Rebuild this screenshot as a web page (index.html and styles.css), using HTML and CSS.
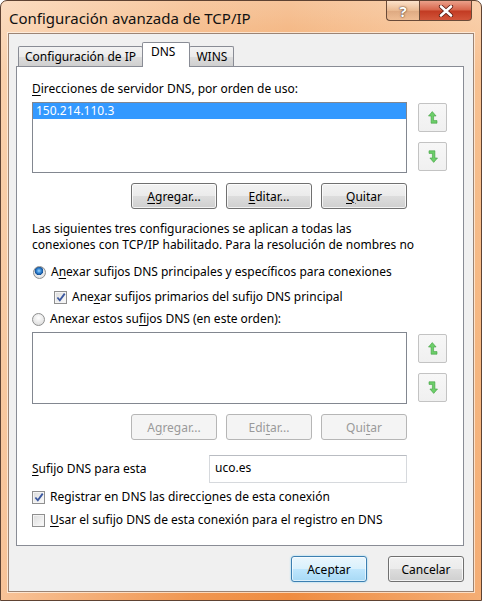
FILE: index.html
```html
<!DOCTYPE html>
<html lang="es">
<head>
    <meta charset="UTF-8">
    <title>Configuración avanzada de TCP/IP</title>
    <link rel="stylesheet" href="styles.css">
</head>
<body>
    <div class="window">
        <div class="titlebar">
            <span class="title">Configuración avanzada de TCP/IP</span>
            <div class="caption-buttons">
                <span class="cap-btn help">?</span>
                <span class="cap-btn close">
                    <svg width="16" height="12" viewBox="0 0 16 12">
                        <path d="M3 1.5 L13 10.5 M13 1.5 L3 10.5" stroke="#5a1a10" stroke-width="4.2" stroke-linecap="round"/>
                        <path d="M3 1.5 L13 10.5 M13 1.5 L3 10.5" stroke="#fff" stroke-width="2.6" stroke-linecap="round"/>
                    </svg>
                </span>
            </div>
        </div>

        <div class="client">
            <div class="tabs">
                <span class="tab">Configuración de IP</span>
                <span class="tab active">DNS</span>
                <span class="tab">WINS</span>
            </div>

            <div class="panel">
                <div class="label"><u>D</u>irecciones de servidor DNS, por orden de uso:</div>
                <div class="list-row">
                    <div class="listbox">
                        <div class="item selected">150.214.110.3</div>
                    </div>
                    <div class="arrows">
                        <span class="arrow">
                            <svg width="10" height="13" viewBox="0 0 10 13"><path class="arrow-icon" d="M0.5 5 L4.3 0.6 L8.1 5 L5.6 5 L5.6 9.6 L9 9.6 L9 12.2 L3.1 12.2 L3.1 5 Z"/></svg>
                        </span>
                        <span class="arrow">
                            <svg width="10" height="13" viewBox="0 0 10 13"><path class="arrow-icon" transform="rotate(180 5 6.5)" d="M0.5 5 L4.3 0.6 L8.1 5 L5.6 5 L5.6 9.6 L9 9.6 L9 12.2 L3.1 12.2 L3.1 5 Z"/></svg>
                        </span>
                    </div>
                </div>
                <div class="btn-row">
                    <span class="btn"><u>A</u>gregar...</span>
                    <span class="btn"><u>E</u>ditar...</span>
                    <span class="btn"><u>Q</u>uitar</span>
                </div>

                <p class="note">Las siguientes tres configuraciones se aplican a todas las<br>conexiones con TCP/IP habilitado. Para la resolución de nombres no</p>

                <div class="option first-radio">
                    <span class="radio checked"></span>
                    <span>A<u>n</u>exar sufijos DNS principales y específicos para conexiones</span>
                </div>
                <div class="option sub">
                    <span class="check checked">
                        <svg width="11" height="11" viewBox="0 0 11 11"><path d="M1.5 5.5 L4.2 8.6 L9.6 1.2" fill="none" stroke="#3b58a0" stroke-width="2"/></svg>
                    </span>
                    <span>Ane<u>x</u>ar sufijos primarios del sufijo DNS principal</span>
                </div>
                <div class="option second-radio">
                    <span class="radio"></span>
                    <span>Anexar estos su<u>f</u>ijos DNS (en este orden):</span>
                </div>

                <div class="list-row second">
                    <div class="listbox"></div>
                    <div class="arrows">
                        <span class="arrow">
                            <svg width="10" height="13" viewBox="0 0 10 13"><path class="arrow-icon" d="M0.5 5 L4.3 0.6 L8.1 5 L5.6 5 L5.6 9.6 L9 9.6 L9 12.2 L3.1 12.2 L3.1 5 Z"/></svg>
                        </span>
                        <span class="arrow">
                            <svg width="10" height="13" viewBox="0 0 10 13"><path class="arrow-icon" transform="rotate(180 5 6.5)" d="M0.5 5 L4.3 0.6 L8.1 5 L5.6 5 L5.6 9.6 L9 9.6 L9 12.2 L3.1 12.2 L3.1 5 Z"/></svg>
                        </span>
                    </div>
                </div>
                <div class="btn-row">
                    <span class="btn disabled">A<u>g</u>regar...</span>
                    <span class="btn disabled">Edi<u>t</u>ar...</span>
                    <span class="btn disabled">Qui<u>t</u>ar</span>
                </div>

                <div class="suffix-row">
                    <span class="suffix-label"><u>S</u>ufijo DNS para esta</span>
                    <span class="textbox">uco.es</span>
                </div>

                <div class="option register">
                    <span class="check checked">
                        <svg width="11" height="11" viewBox="0 0 11 11"><path d="M1.5 5.5 L4.2 8.6 L9.6 1.2" fill="none" stroke="#3b58a0" stroke-width="2"/></svg>
                    </span>
                    <span>Registrar en DNS las direcci<u>o</u>nes de esta conexión</span>
                </div>
                <div class="option use-suffix">
                    <span class="check"></span>
                    <span><u>U</u>sar el sufijo DNS de esta conexión para el registro en DNS</span>
                </div>
            </div>

            <div class="footer">
                <span class="btn default">Aceptar</span>
                <span class="btn">Cancelar</span>
            </div>
        </div>
    </div>
</body>
</html>
```

FILE: styles.css
```css
/* Ventana tipo Vista */
* {
    box-sizing: border-box;
}

body {
    margin: 0;
    font-family: "Noto Sans", "Open Sans", sans-serif;
    font-size: 12px;
    color: #000;
    background: #fff;
}

u {
    text-decoration-thickness: 1px;
    text-underline-offset: 2px;
}

.window {
    width: 482px;
    height: 601px;
    padding: 0 7px 8px 7px;
    border: 1px solid #5e4232;
    border-radius: 7px 7px 0 0;
    display: flex;
    flex-direction: column;
    background:
        linear-gradient(to right, rgba(255, 240, 225, 0.55), rgba(255, 240, 225, 0.1) 40%, rgba(255, 240, 225, 0) 60%, rgba(255, 235, 215, 0.35)),
        linear-gradient(#f6c49a, #f3aa6c 12%, #f09a52 60%, #ef8c40);
}

.titlebar {
    height: 32px;
    display: flex;
    justify-content: space-between;
    align-items: flex-start;
}

.title {
    font-size: 15px;
    line-height: 20px;
    margin-top: 7px;
    margin-left: 1px;
    color: #111;
}

.caption-buttons {
    display: flex;
    margin-right: 2px;
}

.cap-btn {
    height: 20px;
    display: flex;
    align-items: center;
    justify-content: center;
    border: 1px solid #6a4a38;
    border-top: none;
}

.help {
    width: 33px;
    border-radius: 0 0 0 4px;
    border-right: none;
    background: linear-gradient(rgba(255, 240, 225, 0.6), rgba(220, 170, 130, 0.5) 50%, rgba(190, 130, 90, 0.45) 51%, rgba(230, 180, 140, 0.5));
    color: #fff;
    font-size: 15px;
    font-weight: bold;
    text-shadow: 0 0 2px #5a3a28, 0 0 1px #5a3a28;
}

.close {
    width: 53px;
    border-radius: 0 0 4px 0;
    background: linear-gradient(#eba08a, #d7644a 48%, #c23a22 52%, #d2553a);
}

.client {
    flex: 1;
    border: 1px solid #9c8474;
    box-shadow: 0 0 0 1px rgba(255, 245, 235, 0.7);
    background: #f0f0f0;
    padding: 8px 9px 0 7px;
}

.tabs {
    height: 24px;
    display: flex;
    align-items: flex-end;
    padding-left: 2px;
    position: relative;
    z-index: 1;
}

.tab {
    height: 20px;
    padding: 0 6px 0 6px;
    border: 1px solid #898c95;
    border-bottom: none;
    border-radius: 2px 2px 0 0;
    background: linear-gradient(#f3f3f3, #ebebeb 50%, #dddddd 51%, #cfcfcf);
    line-height: 19px;
    margin-left: -1px;
}

.tab:first-child {
    margin-left: 0;
}

.tab.active {
    height: 25px;
    margin-bottom: -1px;
    background: #fff;
    line-height: 18px;
    padding: 0 14px 0 8px;
}

.panel {
    height: 480px;
    border: 1px solid #898c95;
    background: #fff;
    padding: 14px 0 0 15px;
}

.label {
    line-height: 16px;
}

.list-row {
    display: flex;
    margin-top: 5px;
}

.list-row.second {
    margin-top: 5px;
}

.listbox {
    width: 375px;
    height: 71px;
    border: 1px solid #828790;
    background: #fff;
}

.list-row.second .listbox {
    height: 72px;
}

.item {
    height: 16px;
    line-height: 16px;
    padding-left: 3px;
}

.item.selected {
    background: #3399ff;
    color: #fff;
}

.arrows {
    display: flex;
    flex-direction: column;
    gap: 10px;
    margin-left: 11px;
    padding-top: 1px;
}

.list-row.second .arrows {
    padding-top: 2px;
    gap: 10px;
}

.arrow {
    width: 29px;
    height: 29px;
    border: 1px solid #c3c3c3;
    border-radius: 2px;
    background: linear-gradient(#f7f7f7, #f0f0f0);
    display: flex;
    align-items: center;
    justify-content: center;
}

.arrow-icon {
    fill: #6dcf6a;
    stroke: #3f9e3f;
    stroke-width: 0.6;
}

.btn-row {
    width: 375px;
    display: flex;
    justify-content: flex-end;
    gap: 9px;
    margin-top: 10px;
}

.btn {
    width: 86px;
    height: 26px;
    display: flex;
    align-items: center;
    justify-content: center;
    border: 1px solid #707070;
    border-radius: 3px;
    background: linear-gradient(#f2f2f2, #ebebeb 50%, #dddddd 51%, #cfcfcf);
    box-shadow: inset 0 0 0 1px rgba(255, 255, 255, 0.75);
}

.btn.disabled {
    color: #9a9a9a;
    border-color: #b6b6b6;
    background: #f4f4f4;
    box-shadow: none;
}

.note {
    margin: 12px 0 0;
    line-height: 16px;
}

.option {
    display: flex;
    align-items: center;
    height: 16px;
    line-height: 16px;
    gap: 5px;
}

.first-radio {
    margin-top: 11px;
    padding-left: 1px;
}

.sub {
    margin-top: 9px;
    padding-left: 22px;
}

.second-radio {
    margin-top: 6px;
}

.register {
    margin-top: 6px;
}

.use-suffix {
    margin-top: 7px;
}

.radio {
    width: 13px;
    height: 13px;
    border-radius: 50%;
    border: 1px solid #8e8f8f;
    background: radial-gradient(circle at 50% 35%, #ffffff, #e2e2e2 70%, #cfcfcf);
    flex: none;
}

.radio.checked {
    background:
        radial-gradient(circle at 45% 35%, #9fd6ff 0, #3b8fdc 2px, #134f96 4px, transparent 4.6px),
        radial-gradient(circle, #f4f4f4 0, #e6e6e6 5px, #cfcfcf 6px);
}

.check {
    width: 13px;
    height: 13px;
    border: 1px solid #8f8f8f;
    background: linear-gradient(135deg, #dcdcdc, #fbfbfb);
    box-shadow: inset 0 0 0 1px #f4f4f4;
    display: flex;
    align-items: center;
    justify-content: center;
    flex: none;
}

.check.checked svg {
    margin-left: 1px;
}

.suffix-row {
    display: flex;
    align-items: center;
    margin-top: 15px;
}

.suffix-label {
    width: 177px;
    line-height: 16px;
}

.textbox {
    width: 198px;
    height: 28px;
    border: 1px solid #d6d9dd;
    border-top-color: #b9bcc2;
    background: #fff;
    padding: 4px 0 0 5px;
    line-height: 16px;
}

.footer {
    display: flex;
    justify-content: flex-end;
    gap: 21px;
    margin-top: 10px;
}

.footer .btn {
    width: 76px;
}

.btn.default {
    border-color: #3c7fb1;
    background: linear-gradient(#eaf6fd, #d9f0fc 50%, #bee6fd 51%, #a7d9f5);
    box-shadow: inset 0 0 0 1px rgba(255, 255, 255, 0.6), 0 0 2px #7fd0f5;
}
```
